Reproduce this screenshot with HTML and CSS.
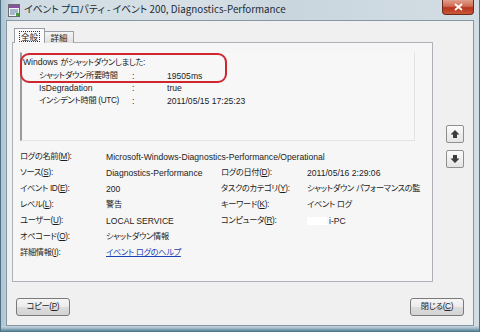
FILE: index.html
```html
<!DOCTYPE html>
<html lang="ja">
<head>
<meta charset="utf-8">
<title>イベント プロパティ</title>
<link rel="stylesheet" href="styles.css">
</head>
<body>
<div class="window">
  <div class="titlebar">
    <svg class="app-icon" width="12" height="13" viewBox="0 0 12 13">
      <rect x="0.5" y="0.5" width="11" height="12" fill="#f4f4f4" stroke="#6d6d6d"/>
      <rect x="1" y="1" width="10" height="3" fill="#8a4f9e"/>
      <rect x="2" y="5.5" width="8" height="1" fill="#5a7ba8"/>
      <rect x="2" y="7.5" width="8" height="1" fill="#5a7ba8"/>
      <rect x="2" y="9.5" width="5" height="1" fill="#5a7ba8"/>
      <rect x="8" y="9" width="3" height="3" fill="#4f9a3c"/>
    </svg>
    <span class="title">イベント プロパティ - イベント 200, Diagnostics-Performance</span>
    <div class="close">
      <svg width="9" height="8" viewBox="0 0 9 8"><path d="M1 1 L8 7 M8 1 L1 7" stroke="#ffffff" stroke-width="1.8"/></svg>
    </div>
  </div>
  <div class="client">
    <div class="main">
      <div class="tabs-area">
        <div class="tabs">
          <div class="tab active"><span class="focus">全般</span></div>
          <div class="tab">詳細</div>
        </div>
        <div class="panel">
          <div class="desc">
            <div class="desc-line">Windows <span class="ja">がシャットダウンしました:</span></div>
            <div class="desc-grid">
              <span class="ja">シャットダウン所要時間</span><span>:</span><span>19505ms</span>
              <span>IsDegradation</span><span>:</span><span>true</span>
              <span class="ja">インシデント時間 (UTC)</span><span>:</span><span>2011/05/15 17:25:23</span>
            </div>
          </div>
          <div class="fields">
            <span class="ja">ログの名前(<u>M</u>):</span><span class="span3">Microsoft-Windows-Diagnostics-Performance/Operational</span>
            <span class="ja">ソース(<u>S</u>):</span><span>Diagnostics-Performance</span><span class="ja">ログの日付(<u>D</u>):</span><span>2011/05/16 2:29:06</span>
            <span class="ja">イベント ID(<u>E</u>):</span><span>200</span><span class="ja">タスクのカテゴリ(<u>Y</u>):</span><span class="ja">シャットダウン パフォーマンスの監</span>
            <span class="ja">レベル(<u>L</u>):</span><span class="ja">警告</span><span class="ja">キーワード(<u>K</u>):</span><span class="ja">イベント ログ</span>
            <span class="ja">ユーザー(<u>U</u>):</span><span>LOCAL SERVICE</span><span class="ja">コンピュータ(<u>R</u>):</span><span><span class="blot"></span>i-PC</span>
            <span class="ja">オペコード(<u>O</u>):</span><span class="ja">シャットダウン情報</span><span></span><span></span>
            <span class="ja">詳細情報(<u>I</u>):</span><span class="ja"><a class="link" href="#">イベント ログのヘルプ</a></span><span></span><span></span>
          </div>
          <div class="annot"></div>
        </div>
      </div>
      <div class="nav">
        <div class="navbtn">
          <svg width="10" height="10" viewBox="0 0 10 10"><path d="M5 1 L9.5 5.5 H7 V9 H3 V5.5 H0.5 Z" fill="#3c3c3c"/></svg>
        </div>
        <div class="navbtn">
          <svg width="10" height="10" viewBox="0 0 10 10"><path d="M5 9 L9.5 4.5 H7 V1 H3 V4.5 H0.5 Z" fill="#3c3c3c"/></svg>
        </div>
      </div>
    </div>
    <div class="footer">
      <div class="btn ja">コピー(<u>P</u>)</div>
      <div class="btn ja">閉じる(<u>C</u>)</div>
    </div>
  </div>
  <div class="frame-bottom"></div>
</div>
</body>
</html>
```
FILE: styles.css
```css
* { box-sizing: border-box; }
html, body {
  margin: 0;
  padding: 0;
}
body {
  width: 480px;
  height: 332px;
  overflow: hidden;
  font-family: "Liberation Sans", "Noto Sans CJK JP", sans-serif;
  font-size: 8.6px;
  font-feature-settings: "palt";
  color: #1c1c1c;
}
.ja {
  font-size: 8.2px;
  letter-spacing: -0.3px;
}
.window {
  width: 480px;
  height: 332px;
  display: flex;
  flex-direction: column;
  background: linear-gradient(90deg, #aec5d3 0%, #cfdbe3 3%, #d7e0e6 40%, #c9d6de 60%, #d3dde4 100%);
  border-left: 1px solid #4f7184;
  border-right: 1px solid #4f7184;
}
.titlebar {
  height: 20px;
  flex: none;
  display: flex;
  align-items: flex-start;
  padding-left: 7px;
}
.app-icon {
  margin-top: 4px;
  flex: none;
}
.title {
  margin-left: 4px;
  margin-top: 2px;
  font-family: "Noto Sans CJK JP", sans-serif;
  font-size: 9.8px;
  line-height: 14px;
  color: #1d2b35;
  white-space: nowrap;
}
.close {
  margin-left: auto;
  margin-right: 5px;
  width: 32px;
  height: 15px;
  border: 1px solid #6a2a1e;
  border-top: none;
  border-radius: 0 0 4px 4px;
  background: linear-gradient(#e0a08c 0%, #cf6a52 45%, #b8341c 55%, #c9583a 100%);
  display: flex;
  align-items: center;
  justify-content: center;
}
.client {
  flex: none;
  height: 306px;
  margin: 0 5px;
  border: 1px solid #8796a3;
  background: #f0f0f0;
  display: flex;
  flex-direction: column;
  padding: 7px 9px 0 5px;
}
.frame-bottom {
  flex: 1;
  background: linear-gradient(#c9d6de 0%, #9fb9c8 40%, #3f6f86 100%);
}
.main {
  display: flex;
  align-items: flex-start;
}
.tabs-area {
  width: 421px;
  flex: none;
}
.tabs {
  display: flex;
  align-items: flex-end;
  padding-left: 2px;
  height: 15px;
  margin-bottom: -1px;
  position: relative;
  z-index: 1;
}
.tab {
  height: 12px;
  width: 29px;
  border: 1px solid #9a9ea6;
  border-bottom: none;
  border-left: none;
  background: linear-gradient(#f6f6f6, #dedede);
  font-family: "Noto Sans CJK JP", sans-serif;
  font-size: 8.5px;
  line-height: 10px;
  text-align: center;
  color: #222;
}
.tab.active {
  height: 15px;
  width: 31px;
  border-left: 1px solid #9a9ea6;
  background: #fbfbfb;
  padding-top: 2px;
}
.focus {
  border: 1px dotted #333;
  padding: 0 1px;
  line-height: 9px;
  display: inline-block;
}
.panel {
  position: relative;
  height: 240px;
  border: 1px solid #aeb1b7;
  background: #f6f6f6;
  padding: 9px 17px 0 7px;
}
.desc {
  height: 89px;
  border: 1px solid #e3e3e3;
  border-left: 2px solid #9b9b9b;
  border-top-color: #f6f6f6;
  background: #f7f7f7;
  padding: 3px 0 0 1px;
  line-height: 12.6px;
}
.desc-grid {
  display: grid;
  grid-template-columns: 93px 35px auto;
  padding-left: 16px;
}
.fields {
  margin-top: 8px;
  display: grid;
  grid-template-columns: 86px 115px 86px auto;
  grid-auto-rows: 16px;
  line-height: 16px;
  white-space: nowrap;
}
.fields u, .btn u { text-decoration: underline; }
.span3 { grid-column: 2 / 5; }
.blot {
  display: inline-block;
  width: 20px;
  height: 8px;
  background: #ffffff;
  vertical-align: -1px;
  margin-right: 2px;
}
.link {
  color: #1d3fb4;
  text-decoration: underline;
}
.annot {
  position: absolute;
  left: 7px;
  top: 10px;
  width: 207px;
  height: 30px;
  border: 2px solid #d0272f;
  border-radius: 9px;
}
.nav {
  margin-left: 13px;
  margin-top: 97px;
  display: flex;
  flex-direction: column;
  gap: 7px;
}
.navbtn {
  width: 18px;
  height: 18px;
  border: 1px solid #8e8f8f;
  border-radius: 2px;
  background: linear-gradient(#fbfbfb, #e4e4e4);
  display: flex;
  align-items: center;
  justify-content: center;
}
.footer {
  display: flex;
  justify-content: space-between;
  padding-left: 4px;
  margin-top: 16px;
}
.btn {
  width: 54px;
  height: 18px;
  border: 1px solid #7a7a7a;
  border-radius: 3px;
  background: linear-gradient(#f5f5f5 0%, #ebebeb 50%, #dcdcdc 51%, #d4d4d4 100%);
  text-align: center;
  line-height: 16px;
  color: #222;
}
```
